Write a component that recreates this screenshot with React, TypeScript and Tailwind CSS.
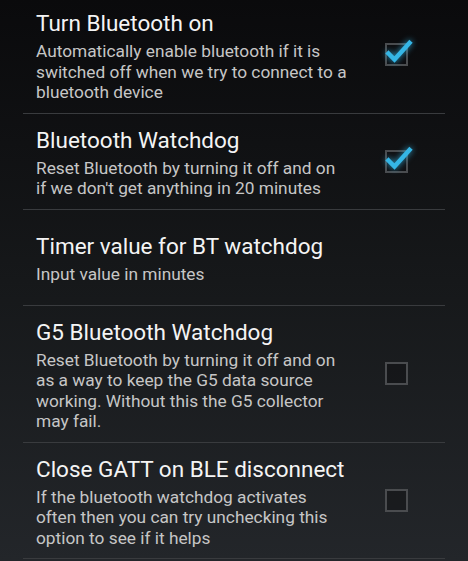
import type { ReactNode } from "react";

type Pref = {
  title: string;
  lines: string[];
  checked?: boolean;
};

const prefs: Pref[] = [
  {
    title: "Turn Bluetooth on",
    lines: [
      "Automatically enable bluetooth if it is",
      "switched off when we try to connect to a",
      "bluetooth device",
    ],
    checked: true,
  },
  {
    title: "Bluetooth Watchdog",
    lines: ["Reset Bluetooth by turning it off and on", "if we don't get anything in 20 minutes"],
    checked: true,
  },
  {
    title: "Timer value for BT watchdog",
    lines: ["Input value in minutes"],
  },
  {
    title: "G5 Bluetooth Watchdog",
    lines: [
      "Reset Bluetooth by turning it off and on",
      "as a way to keep the G5 data source",
      "working. Without this the G5 collector",
      "may fail.",
    ],
    checked: false,
  },
  {
    title: "Close GATT on BLE disconnect",
    lines: [
      "If the bluetooth watchdog activates",
      "often then you can try unchecking this",
      "option to see if it helps",
    ],
    checked: false,
  },
];

function HoloCheckbox({ checked }: { checked: boolean }) {
  return (
    <div className="relative h-[23px] w-[23px] border-2 border-[#4a4c4f] bg-[#0e0f11]/40">
      {checked && (
        <svg
          className="absolute left-[-2px] top-[-2px] overflow-visible drop-shadow-[0_0_3px_rgba(51,181,229,0.85)]"
          width="27"
          height="27"
          viewBox="0 0 27 27"
        >
          <path
            d="M3.5 10.5 L9.5 16.5 L24.5 0"
            fill="none"
            stroke="#35b6e6"
            strokeWidth="4.5"
            strokeLinecap="square"
            strokeLinejoin="miter"
          />
        </svg>
      )}
    </div>
  );
}

function PrefRow({ pref, first }: { pref: Pref; first?: boolean }) {
  let widget: ReactNode = null;
  if (pref.checked !== undefined) widget = <HoloCheckbox checked={pref.checked} />;

  return (
    <div
      className={`flex min-h-[96px] items-center border-b border-[#393b3e] ${first ? "-mt-[3px]" : ""}`}
    >
      <div className="flex-1 pb-[10px] pl-[13px] pt-[13px]">
        <div className="whitespace-nowrap text-[22.5px] leading-[26px] text-[#f4f4f4]">{pref.title}</div>
        <div className="mt-[5px] text-[17.3px] leading-[20.5px] text-[#c6c6c6]">
          {pref.lines.map((line) => (
            <div key={line} className="whitespace-nowrap">
              {line}
            </div>
          ))}
        </div>
      </div>
      <div className="mr-[37px] w-[23px] shrink-0">{widget}</div>
    </div>
  );
}

export default function App() {
  return (
    <div
      className="h-[561px] w-[468px] overflow-hidden bg-gradient-to-b from-[#0a0a0c] via-[#16181a] to-[#23262a] px-[23px]"
      style={{ fontFamily: "Roboto, 'Noto Sans', sans-serif" }}
    >
      {prefs.map((pref, i) => (
        <PrefRow key={pref.title} pref={pref} first={i === 0} />
      ))}
    </div>
  );
}
